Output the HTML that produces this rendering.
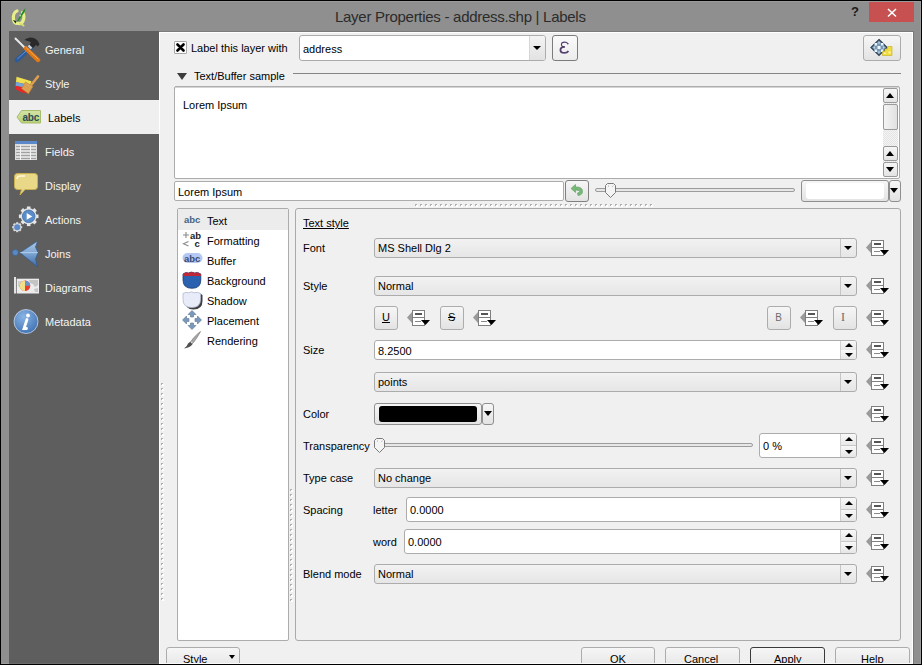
<!DOCTYPE html>
<html><head><meta charset="utf-8">
<style>
*{box-sizing:border-box;margin:0;padding:0}
html,body{width:922px;height:665px;overflow:hidden;background:#000}
body{position:relative;font-family:"Liberation Sans",sans-serif;font-size:11px;color:#000}
.a{position:absolute}
.t{position:absolute;line-height:13px;white-space:nowrap;font-size:11px}
#frame{left:1px;top:1px;width:920px;height:663px;background:#8f8f8f;border-top:1px solid #9b9b9b;border-right:1px solid #9b9b9b;border-bottom:1px solid #9b9b9b}
#side{left:9px;top:31px;width:150px;height:633px;background:#5e5e5e;border-bottom:1px solid #6b6b6b}
#content{left:159px;top:31px;width:755px;height:633px;background:#f0f0f0;border-top:1px solid #7a7a7a;border-right:1px solid #7a7a7a;box-shadow:inset 1px 1px 0 #fff,inset -1px -1px 0 #fff}
.si{position:absolute;left:0;width:150px;height:34px}
.si .t{color:#f4f4f4;top:12px;left:36px}
.si.sel{background:#efefef}
.si.sel .t{color:#000}
.ico{position:absolute;left:5px;top:5px;width:24px;height:24px}
.box{position:absolute;background:#fff;border:1px solid #acacac;border-radius:2px}
.combo{position:absolute;border:1px solid #acacac;border-radius:3px;background:linear-gradient(#f2f2f2,#e6e6e6)}
.combo .arr{position:absolute;right:0;top:0;bottom:0;width:16px;border-left:1px solid #c5c5c5}
.combo .arr:after{content:"";position:absolute;left:3px;top:7px;border-left:4px solid transparent;border-right:4px solid transparent;border-top:4px solid #000}
.btn{position:absolute;border:1px solid #acacac;border-radius:3px;background:linear-gradient(#f6f6f6,#e3e3e3)}
.dd{position:absolute;width:23px;height:16px}
.spin{position:absolute;background:#fff;border:1px solid #acacac;border-radius:3px}
.spin .sb{position:absolute;right:0;top:0;bottom:0;width:16px;border-left:1px solid #d0d0d0;background:linear-gradient(#f8f8f8,#e8e8e8 49%,#c8c8c8 49%,#c8c8c8 51%,#f8f8f8 51%,#e6e6e6);border-radius:0 2px 2px 0}
.spin .sb:before{content:"";position:absolute;left:4px;top:3px;border-left:4.5px solid transparent;border-right:4.5px solid transparent;border-bottom:4px solid #000}
.spin .sb:after{content:"";position:absolute;left:4px;bottom:3px;border-left:4.5px solid transparent;border-right:4.5px solid transparent;border-top:4px solid #000}
.spin.s20 .sb:before{top:2px}.spin.s20 .sb:after{bottom:2px}
.lbl{position:absolute;line-height:13px;white-space:nowrap}
</style></head><body>
<div id="frame" class="a"></div>
<!-- title -->
<div class="t" style="left:335px;top:8px;font-size:15px;letter-spacing:-0.28px;line-height:17px;color:#2b2b2b">Layer Properties - address.shp | Labels</div>
<div class="t" style="left:851px;top:5px;font-size:13px;font-weight:bold;color:#1a1a1a">?</div>
<div class="a" style="left:869px;top:2px;width:45px;height:20px;background:#c75050"></div>

<div id="side" class="a">
  <div class="si" style="top:1px"><div class="t">General</div></div>
  <div class="si" style="top:35px"><div class="t">Style</div></div>
  <div class="si sel" style="top:69px"><div class="t" style="left:39px">Labels</div></div>
  <div class="si" style="top:103px"><div class="t">Fields</div></div>
  <div class="si" style="top:137px"><div class="t">Display</div></div>
  <div class="si" style="top:171px"><div class="t">Actions</div></div>
  <div class="si" style="top:205px"><div class="t">Joins</div></div>
  <div class="si" style="top:239px"><div class="t">Diagrams</div></div>
  <div class="si" style="top:273px"><div class="t">Metadata</div></div>
</div>
<div id="content" class="a"></div>

<!-- top row -->
<div class="a" style="left:174px;top:41px;width:13px;height:13px;background:#fff;border:1px solid #a8a8a8;border-radius:1px"></div>
<svg class="a" style="left:176px;top:43px" width="9" height="9" viewBox="0 0 9 9"><path d="M1.5 1.5L7.5 7.5M7.5 1.5L1.5 7.5" stroke="#000" stroke-width="2.6" stroke-linecap="round"/></svg>
<div class="t" style="left:191px;top:42px">Label this layer with</div>
<div class="box" style="left:299px;top:35px;width:247px;height:26px;border-radius:3px"></div>
<div class="a" style="left:529px;top:36px;width:16px;height:24px;border-left:1px solid #d6d6d6;background:linear-gradient(#f4f4f4,#e2e2e2);border-radius:0 2px 2px 0"></div>
<div class="a" style="left:533px;top:46px;border-left:4px solid transparent;border-right:4px solid transparent;border-top:4px solid #000"></div>
<div class="t" style="left:303px;top:43px">address</div>
<div class="btn" style="left:552px;top:35px;width:26px;height:26px;border-color:#7c7c7c;background:linear-gradient(#fafafa,#ececec)"></div>
<svg class="a" style="left:559px;top:41px" width="11" height="13" viewBox="0 0 12 14"><path d="M9.8 3C9 1.6 7.6 1.1 6.1 1.1C3.8 1.1 2.6 2.3 2.6 3.8C2.6 5.3 4 6.4 6.3 6.4" fill="none" stroke="#55406e" stroke-width="1.2"/><circle cx="9.6" cy="2.9" r="0.9" fill="#55406e"/><path d="M6.3 6.4C3.3 6.4 1.6 7.8 1.6 9.7C1.6 11.6 3.3 12.9 5.9 12.9C7.9 12.9 9.4 12.1 10.3 10.7" fill="none" stroke="#55406e" stroke-width="2"/></svg>
<div class="btn" style="left:863px;top:35px;width:38px;height:26px"></div>

<div class="a" style="left:177px;top:73px;border-left:5.5px solid transparent;border-right:5.5px solid transparent;border-top:7px solid #3c3c3c"></div>
<div class="t" style="left:194px;top:70px">Text/Buffer sample</div>
<div class="a" style="left:293px;top:73px;width:608px;height:1px;background:#858585"></div>

<div class="box" style="left:174px;top:86px;width:726px;height:93px;border-color:#acacac;box-shadow:inset 0 1px 0 #d4d4d4"></div>
<div class="t" style="left:183px;top:99px">Lorem Ipsum</div>

<div class="box" style="left:174px;top:181px;width:390px;height:20px"></div>
<div class="t" style="left:178px;top:186px">Lorem Ipsum</div>
<div class="btn" style="left:565px;top:180px;width:24px;height:22px;border-color:#808080"></div>
<div class="a" style="left:595px;top:188px;width:200px;height:4px;border:1px solid #9c9c9c;border-radius:2px;background:#e7e7e7"></div>
<div class="btn" style="left:801px;top:180px;width:88px;height:22px;border-color:#8f8f8f"></div><div class="a" style="left:806px;top:183px;width:78px;height:16px;background:#fff;border-radius:3px"></div>
<div class="btn" style="left:889px;top:180px;width:12px;height:22px;border-color:#8f8f8f"></div>
<div class="a" style="left:890px;top:188px;border-left:4.5px solid transparent;border-right:4.5px solid transparent;border-top:5px solid #000"></div>
<div class="a" style="left:415px;top:204px;width:239px;height:2px;background:repeating-linear-gradient(90deg,#b0b0b0 0 2px,transparent 2px 5px)"></div><div class="a" style="left:416px;top:205px;width:239px;height:2px;background:repeating-linear-gradient(90deg,#fff 0 2px,transparent 2px 5px)"></div>

<div class="box" style="left:177px;top:208px;width:112px;height:433px"></div>
<div class="a" style="left:295px;top:208px;width:606px;height:433px;border:1px solid #aaaaaa;border-radius:3px"></div>

<div class="t" style="left:303px;top:217px;text-decoration:underline">Text style</div>
<div class="t" style="left:303px;top:242px">Font</div>
<div class="t" style="left:303px;top:280px">Style</div>
<div class="t" style="left:303px;top:344px">Size</div>
<div class="t" style="left:303px;top:408px">Color</div>
<div class="t" style="left:303px;top:440px">Transparency</div>
<div class="t" style="left:303px;top:472px">Type case</div>
<div class="t" style="left:303px;top:504px">Spacing</div>
<div class="t" style="left:303px;top:568px">Blend mode</div>
<div class="t" style="left:373px;top:504px">letter</div>
<div class="t" style="left:373px;top:536px">word</div>
<div class="combo" style="left:374px;top:238px;width:483px;height:20px"><div class="arr"></div></div><div class="t" style="left:378px;top:242px">MS Shell Dlg 2</div>
<div class="combo" style="left:374px;top:276px;width:483px;height:20px"><div class="arr"></div></div><div class="t" style="left:378px;top:280px">Normal</div>
<div class="btn" style="left:374px;top:306px;width:24px;height:24px"></div><div class="t" style="left:382px;top:311px;text-decoration:underline">U</div>
<div class="btn" style="left:440px;top:306px;width:24px;height:24px"></div><div class="t" style="left:448px;top:311px;text-decoration:line-through">S</div>
<div class="btn" style="left:767px;top:306px;width:24px;height:24px"></div><div class="t" style="left:775px;top:311px;color:#6a6a6a;font-size:11px;transform:scaleX(0.9)">B</div>
<div class="btn" style="left:833px;top:306px;width:24px;height:24px"></div><div class="t" style="left:841px;top:311px;color:#6a6a6a;font-family:'Liberation Serif';font-size:12px">I</div>
<div class="spin s20" style="left:374px;top:340px;width:483px;height:20px"><div class="sb"></div></div><div class="t" style="left:378px;top:345px">8.2500</div>
<div class="combo" style="left:374px;top:372px;width:483px;height:20px"><div class="arr"></div></div><div class="t" style="left:378px;top:376px">points</div>
<div class="btn" style="left:374px;top:403px;width:108px;height:22px;border-color:#8f8f8f"></div><div class="a" style="left:379px;top:406px;width:98px;height:16px;background:#000;border-radius:3px"></div>
<div class="btn" style="left:482px;top:403px;width:12px;height:22px;border-color:#8f8f8f"></div><div class="a" style="left:484px;top:411px;border-left:4px solid transparent;border-right:4px solid transparent;border-top:5px solid #000"></div>
<div class="a" style="left:379px;top:443px;width:374px;height:4px;border:1px solid #9c9c9c;border-radius:2px;background:#e7e7e7"></div>
<svg class="a" style="left:373px;top:437px" width="13" height="17" viewBox="0 0 13 17"><path d="M1.5 3.5L3.5 1.5H9.5L11.5 3.5V10.5L6.5 15.5L1.5 10.5Z" fill="#f4f4f4" stroke="#7a7a7a" stroke-linejoin="round"/><path d="M4 4.5L4.8 3.8M8.5 4.5L9.3 3.8" stroke="#999"/></svg>
<div class="spin" style="left:759px;top:433px;width:98px;height:25px"><div class="sb"></div></div><div class="t" style="left:763px;top:440px">0 %</div>
<div class="combo" style="left:374px;top:468px;width:483px;height:20px"><div class="arr"></div></div><div class="t" style="left:378px;top:472px">No change</div>
<div class="spin" style="left:406px;top:497px;width:451px;height:25px"><div class="sb"></div></div><div class="t" style="left:410px;top:504px">0.0000</div>
<div class="spin" style="left:404px;top:529px;width:453px;height:25px"><div class="sb"></div></div><div class="t" style="left:408px;top:536px">0.0000</div>
<div class="combo" style="left:374px;top:564px;width:483px;height:20px"><div class="arr"></div></div><div class="t" style="left:378px;top:568px">Normal</div>
<svg class="dd" style="left:866px;top:240px" width="23" height="16" viewBox="0 0 23 16"><path d="M0 7.5L5 2V13Z" fill="#9a9a9a"/><rect x="5.5" y="0.5" width="12" height="15" fill="#fff" stroke="#7f7f7f"/><path d="M5.5 7.5H17.5" stroke="#7f7f7f"/><rect x="8" y="3" width="7" height="2" fill="#555"/><path d="M8 11.5H14" stroke="#888"/><path d="M14 10H23L18.5 15Z" fill="#000"/></svg>
<svg class="dd" style="left:866px;top:278px" width="23" height="16" viewBox="0 0 23 16"><path d="M0 7.5L5 2V13Z" fill="#9a9a9a"/><rect x="5.5" y="0.5" width="12" height="15" fill="#fff" stroke="#7f7f7f"/><path d="M5.5 7.5H17.5" stroke="#7f7f7f"/><rect x="8" y="3" width="7" height="2" fill="#555"/><path d="M8 11.5H14" stroke="#888"/><path d="M14 10H23L18.5 15Z" fill="#000"/></svg>
<svg class="dd" style="left:866px;top:310px" width="23" height="16" viewBox="0 0 23 16"><path d="M0 7.5L5 2V13Z" fill="#9a9a9a"/><rect x="5.5" y="0.5" width="12" height="15" fill="#fff" stroke="#7f7f7f"/><path d="M5.5 7.5H17.5" stroke="#7f7f7f"/><rect x="8" y="3" width="7" height="2" fill="#555"/><path d="M8 11.5H14" stroke="#888"/><path d="M14 10H23L18.5 15Z" fill="#000"/></svg>
<svg class="dd" style="left:866px;top:342px" width="23" height="16" viewBox="0 0 23 16"><path d="M0 7.5L5 2V13Z" fill="#9a9a9a"/><rect x="5.5" y="0.5" width="12" height="15" fill="#fff" stroke="#7f7f7f"/><path d="M5.5 7.5H17.5" stroke="#7f7f7f"/><rect x="8" y="3" width="7" height="2" fill="#555"/><path d="M8 11.5H14" stroke="#888"/><path d="M14 10H23L18.5 15Z" fill="#000"/></svg>
<svg class="dd" style="left:866px;top:374px" width="23" height="16" viewBox="0 0 23 16"><path d="M0 7.5L5 2V13Z" fill="#9a9a9a"/><rect x="5.5" y="0.5" width="12" height="15" fill="#fff" stroke="#7f7f7f"/><path d="M5.5 7.5H17.5" stroke="#7f7f7f"/><rect x="8" y="3" width="7" height="2" fill="#555"/><path d="M8 11.5H14" stroke="#888"/><path d="M14 10H23L18.5 15Z" fill="#000"/></svg>
<svg class="dd" style="left:866px;top:406px" width="23" height="16" viewBox="0 0 23 16"><path d="M0 7.5L5 2V13Z" fill="#9a9a9a"/><rect x="5.5" y="0.5" width="12" height="15" fill="#fff" stroke="#7f7f7f"/><path d="M5.5 7.5H17.5" stroke="#7f7f7f"/><rect x="8" y="3" width="7" height="2" fill="#555"/><path d="M8 11.5H14" stroke="#888"/><path d="M14 10H23L18.5 15Z" fill="#000"/></svg>
<svg class="dd" style="left:866px;top:438px" width="23" height="16" viewBox="0 0 23 16"><path d="M0 7.5L5 2V13Z" fill="#9a9a9a"/><rect x="5.5" y="0.5" width="12" height="15" fill="#fff" stroke="#7f7f7f"/><path d="M5.5 7.5H17.5" stroke="#7f7f7f"/><rect x="8" y="3" width="7" height="2" fill="#555"/><path d="M8 11.5H14" stroke="#888"/><path d="M14 10H23L18.5 15Z" fill="#000"/></svg>
<svg class="dd" style="left:866px;top:470px" width="23" height="16" viewBox="0 0 23 16"><path d="M0 7.5L5 2V13Z" fill="#9a9a9a"/><rect x="5.5" y="0.5" width="12" height="15" fill="#fff" stroke="#7f7f7f"/><path d="M5.5 7.5H17.5" stroke="#7f7f7f"/><rect x="8" y="3" width="7" height="2" fill="#555"/><path d="M8 11.5H14" stroke="#888"/><path d="M14 10H23L18.5 15Z" fill="#000"/></svg>
<svg class="dd" style="left:866px;top:502px" width="23" height="16" viewBox="0 0 23 16"><path d="M0 7.5L5 2V13Z" fill="#9a9a9a"/><rect x="5.5" y="0.5" width="12" height="15" fill="#fff" stroke="#7f7f7f"/><path d="M5.5 7.5H17.5" stroke="#7f7f7f"/><rect x="8" y="3" width="7" height="2" fill="#555"/><path d="M8 11.5H14" stroke="#888"/><path d="M14 10H23L18.5 15Z" fill="#000"/></svg>
<svg class="dd" style="left:866px;top:534px" width="23" height="16" viewBox="0 0 23 16"><path d="M0 7.5L5 2V13Z" fill="#9a9a9a"/><rect x="5.5" y="0.5" width="12" height="15" fill="#fff" stroke="#7f7f7f"/><path d="M5.5 7.5H17.5" stroke="#7f7f7f"/><rect x="8" y="3" width="7" height="2" fill="#555"/><path d="M8 11.5H14" stroke="#888"/><path d="M14 10H23L18.5 15Z" fill="#000"/></svg>
<svg class="dd" style="left:866px;top:566px" width="23" height="16" viewBox="0 0 23 16"><path d="M0 7.5L5 2V13Z" fill="#9a9a9a"/><rect x="5.5" y="0.5" width="12" height="15" fill="#fff" stroke="#7f7f7f"/><path d="M5.5 7.5H17.5" stroke="#7f7f7f"/><rect x="8" y="3" width="7" height="2" fill="#555"/><path d="M8 11.5H14" stroke="#888"/><path d="M14 10H23L18.5 15Z" fill="#000"/></svg>
<svg class="dd" style="left:407px;top:310px" width="23" height="16" viewBox="0 0 23 16"><path d="M0 7.5L5 2V13Z" fill="#9a9a9a"/><rect x="5.5" y="0.5" width="12" height="15" fill="#fff" stroke="#7f7f7f"/><path d="M5.5 7.5H17.5" stroke="#7f7f7f"/><rect x="8" y="3" width="7" height="2" fill="#555"/><path d="M8 11.5H14" stroke="#888"/><path d="M14 10H23L18.5 15Z" fill="#000"/></svg>
<svg class="dd" style="left:473px;top:310px" width="23" height="16" viewBox="0 0 23 16"><path d="M0 7.5L5 2V13Z" fill="#9a9a9a"/><rect x="5.5" y="0.5" width="12" height="15" fill="#fff" stroke="#7f7f7f"/><path d="M5.5 7.5H17.5" stroke="#7f7f7f"/><rect x="8" y="3" width="7" height="2" fill="#555"/><path d="M8 11.5H14" stroke="#888"/><path d="M14 10H23L18.5 15Z" fill="#000"/></svg>
<svg class="dd" style="left:800px;top:310px" width="23" height="16" viewBox="0 0 23 16"><path d="M0 7.5L5 2V13Z" fill="#9a9a9a"/><rect x="5.5" y="0.5" width="12" height="15" fill="#fff" stroke="#7f7f7f"/><path d="M5.5 7.5H17.5" stroke="#7f7f7f"/><rect x="8" y="3" width="7" height="2" fill="#555"/><path d="M8 11.5H14" stroke="#888"/><path d="M14 10H23L18.5 15Z" fill="#000"/></svg>
<div class="a" style="left:178px;top:209px;width:110px;height:21px;background:#ececec"></div>
<div class="t" style="left:207px;top:215px">Text</div>
<div class="t" style="left:207px;top:235px">Formatting</div>
<div class="t" style="left:207px;top:255px">Buffer</div>
<div class="t" style="left:207px;top:275px">Background</div>
<div class="t" style="left:207px;top:295px">Shadow</div>
<div class="t" style="left:207px;top:315px">Placement</div>
<div class="t" style="left:207px;top:335px">Rendering</div>
<div class="btn" style="left:166px;top:647px;width:74px;height:24px;border-color:#acacac"></div><div class="t" style="left:183px;top:653px">Style</div>
<div class="a" style="left:229px;top:655px;border-left:3px solid transparent;border-right:3px solid transparent;border-top:4px solid #000"></div>
<div class="btn" style="left:581px;top:647px;width:74px;height:24px;border-color:#acacac"></div><div class="t" style="left:610px;top:653px">OK</div>
<div class="btn" style="left:665px;top:647px;width:75px;height:24px;border-color:#acacac"></div><div class="t" style="left:684px;top:653px">Cancel</div>
<div class="btn" style="left:750px;top:647px;width:75px;height:24px;border-color:#3a3a3a"></div><div class="t" style="left:774px;top:653px">Apply</div>
<div class="btn" style="left:835px;top:647px;width:75px;height:24px;border-color:#acacac"></div><div class="t" style="left:861px;top:653px">Help</div>
<div class="a" style="left:160px;top:663px;width:753px;height:1px;background:#fafafa"></div><div class="a" style="left:0;top:664px;width:922px;height:1px;background:#000"></div>
<svg class="a" style="left:8px;top:4px" width="24" height="24" viewBox="0 0 24 24">
<path d="M9 7C6 8 5 12 5.5 15.5C6 19 8.5 19.5 9.5 19.5" stroke="#e6ef88" stroke-width="3.2" fill="none" stroke-linecap="round"/>
<path d="M14.5 8.5C16 10 16.5 14 15 17C14 19 12.5 20 11 19.5" stroke="#e6ef88" stroke-width="3.2" fill="none" stroke-linecap="round"/>
<path d="M12 19.5L15.5 21.5" stroke="#d8e070" stroke-width="2" stroke-linecap="round"/>
<path d="M9 17L15 7L17.5 4L16.5 8L10.5 17Z" fill="#1c8a1c"/>
<circle cx="12.3" cy="11.5" r="0.9" fill="#9ae89a"/>
<path d="M5 16L8.5 17L7.5 19.5Z" fill="#1a2a1a"/>
</svg>
<svg class="a" style="left:886px;top:7px" width="12" height="11" viewBox="0 0 12 11"><path d="M2 2L10 9.5M10 2L2 9.5" stroke="#fff" stroke-width="1.6"/></svg>
<svg class="a" style="left:12px;top:35px" width="30" height="28" viewBox="0 0 30 28">
<path d="M3.5 3.5L14 14" stroke="#e8e8e8" stroke-width="2" stroke-linecap="round"/>
<path d="M19 12.5L5 25" stroke="#2d5a98" stroke-width="4.5" stroke-linecap="round"/>
<path d="M18 12.5L5.5 23.8" stroke="#6890c8" stroke-width="1" stroke-linecap="round"/>
<path d="M14 13.5L26 25" stroke="#e07818" stroke-width="4.5" stroke-linecap="round"/>
<path d="M14.5 13L26 24" stroke="#f5a850" stroke-width="1" stroke-linecap="round"/>
<path d="M12.5 5C16 1.5 22 1.5 25.5 5.5L27.5 9L26 11.5L24 10L21 13L17.5 9.5L19 7.5C17 6 15 5.5 12.5 5Z" fill="#2a2a2a"/>
<path d="M16.5 10.5L19.5 13.5" stroke="#d8d8d8" stroke-width="2.2"/>
</svg>
<svg class="a" style="left:12px;top:72px" width="30" height="24" viewBox="0 0 30 24">
<path d="M4.5 4.8L19.5 9.2L18 13.2L4 10Z" fill="#f0e050"/>
<path d="M4 10L14 12.5L12 16L3.5 13.8Z" fill="#78a4d8"/>
<path d="M3.5 13.8L12 15.5L16.5 21.5L10 20.5L3 17Z" fill="#e82828"/>
<path d="M13.5 10L21 14.5L16.5 21.8L9.5 16.5Z" fill="#dca458" stroke="#b88030" stroke-width="0.6"/>
<path d="M12 12.5L19 17M11 14.5L17.5 19" stroke="#c89040" stroke-width="0.5"/>
<path d="M19.5 12.5L26 4.5" stroke="#dca050" stroke-width="2.6" stroke-linecap="round"/>
</svg>
<svg class="a" style="left:16px;top:109px" width="27" height="16" viewBox="0 0 27 16">
<defs><linearGradient id="lg" x1="0" y1="0" x2="0" y2="1"><stop offset="0" stop-color="#d4e4a8"/><stop offset="1" stop-color="#b8d070"/></linearGradient></defs>
<path d="M1 8L5.5 1.5H24.5V14H5.5Z" fill="url(#lg)" stroke="#a8bc70" stroke-width="1"/>
<text x="6.5" y="11.5" font-family="Liberation Sans" font-weight="bold" font-size="10" letter-spacing="-0.2" fill="#2a4a58">abc</text>
</svg>
<svg class="a" style="left:14px;top:140px" width="24" height="21" viewBox="0 0 24 21">
<rect x="1" y="1" width="22" height="19" fill="#dcdcdc"/>
<rect x="1" y="1" width="22" height="3" fill="#5a88c8"/>
<path d="M2 6.5H22M2 9.5H22M2 12.5H22M2 15.5H22M2 18.5H22" stroke="#a0a0a0" stroke-width="1"/>
<path d="M6.5 5V20M16.5 5V20" stroke="#f4f4f4" stroke-width="1"/>
</svg>
<svg class="a" style="left:13px;top:172px" width="26" height="25" viewBox="0 0 26 25">
<path d="M4.5 1.5H21.5Q24.5 1.5 24.5 4.5V14.5Q24.5 17.5 21.5 17.5H12L7 23L8.5 17.5H4.5Q1.5 17.5 1.5 14.5V4.5Q1.5 1.5 4.5 1.5Z" fill="#e8d888" stroke="#c8b050" stroke-width="1"/>
<path d="M4 7Q4 4 8 4H12" stroke="#fff8d8" stroke-width="1.5" fill="none"/>
</svg>
<svg class="a" style="left:12px;top:203px" width="30" height="30" viewBox="0 0 30 30">
<g transform="translate(16.7,13.3)"><g fill="#e6e6e6"><rect x="-1.8" y="-9.8" width="3.6" height="19.6" transform="rotate(0)"/><rect x="-1.8" y="-9.8" width="3.6" height="19.6" transform="rotate(45)"/><rect x="-1.8" y="-9.8" width="3.6" height="19.6" transform="rotate(90)"/><rect x="-1.8" y="-9.8" width="3.6" height="19.6" transform="rotate(135)"/></g><circle r="8" fill="#e6e6e6"/>
<circle r="6.3" fill="#5a8cc8" stroke="#3f6ea8" stroke-width="0.8"/><path d="M-2 -3.2L3.6 0.2L-2 3.4Z" fill="#fff"/></g>
<g transform="translate(5.2,24.2)"><g fill="#d8d8d8"><rect x="-1.1" y="-5" width="2.2" height="10" transform="rotate(0)"/><rect x="-1.1" y="-5" width="2.2" height="10" transform="rotate(45)"/><rect x="-1.1" y="-5" width="2.2" height="10" transform="rotate(90)"/><rect x="-1.1" y="-5" width="2.2" height="10" transform="rotate(135)"/></g><circle r="3.9" fill="#d8d8d8"/><circle r="3" fill="#5a8ac8"/></g>
</svg>
<svg class="a" style="left:12px;top:239px" width="28" height="30" viewBox="0 0 28 30">
<defs><linearGradient id="jg" x1="0" y1="0" x2="0" y2="1"><stop offset="0" stop-color="#b0cce8"/><stop offset="0.5" stop-color="#7aa2d0"/><stop offset="1" stop-color="#3a66a4"/></linearGradient></defs>
<circle cx="3.3" cy="13.6" r="3" fill="#5a88c0" stroke="#3a6098" stroke-width="0.6"/>
<path d="M8 13.6L25.6 2L23.5 8L26 13.6L23.5 20L25.6 28Z" fill="url(#jg)" stroke="#2e5a90" stroke-width="0.7"/>
<path d="M8 13.6L26 13.6" stroke="#d8e8f8" stroke-width="0.6"/>
</svg>
<svg class="a" style="left:13px;top:276px" width="27" height="19" viewBox="0 0 27 19">
<rect x="1" y="1" width="2" height="16.5" fill="#e4e4e4"/>
<rect x="3.7" y="2.7" width="22.3" height="14.8" fill="#ececec"/>
<path d="M16 4H25V9L22 11L20 8L17 7Z" fill="#c4c4c4"/><path d="M5 5H9L10 8L7 12L5 10Z" fill="#d0d0d0"/><path d="M21 13L25 12V16H22Z" fill="#c8c8c8"/>
<circle cx="12" cy="9.7" r="5.3" fill="#e84030"/>
<path d="M12 9.7V4.4A5.3 5.3 0 0 0 12 15Z" fill="#f2e088"/>
<path d="M12 9.7V4.4A5.3 5.3 0 0 1 17.3 9.7Z" fill="#6a92cc"/>
</svg>
<svg class="a" style="left:13px;top:309px" width="26" height="26" viewBox="0 0 26 26">
<defs><radialGradient id="mg" cx="0.4" cy="0.3" r="0.8"><stop offset="0" stop-color="#8ab4e4"/><stop offset="1" stop-color="#3a6cb0"/></radialGradient></defs>
<circle cx="13" cy="12.5" r="12" fill="url(#mg)" stroke="#c8d8ec" stroke-width="0.8"/>
<path d="M14 10.5L11 19.5H13.5" stroke="#fff" stroke-width="2.8" fill="none" stroke-linecap="round"/>
<circle cx="15" cy="6.5" r="1.9" fill="#fff"/>
</svg>
<div class="t" style="left:184px;top:213px;font-size:9.5px;font-weight:bold;color:#456483">abc</div>
<svg class="a" style="left:182px;top:230px" width="22" height="18" viewBox="0 0 22 18">
<path d="M1 5H7M4 2V8" stroke="#8a8a8a" stroke-width="1.1"/>
<text x="8" y="8.5" font-family="Liberation Sans" font-weight="bold" font-size="9.5" fill="#222">ab</text>
<path d="M6.5 11.5L1.5 13.8L6.5 16" stroke="#8a8a8a" stroke-width="1.1" fill="none"/>
<text x="12.5" y="16.5" font-family="Liberation Sans" font-weight="bold" font-size="9.5" fill="#222">c</text>
</svg>
<svg class="a" style="left:182px;top:251px" width="22" height="14" viewBox="0 0 22 14">
<rect x="0.5" y="2" width="20" height="10" rx="5" fill="#b4c8f4"/>
<text x="2" y="10.5" font-family="Liberation Sans" font-weight="bold" font-size="9.5" fill="#3a4a70">abc</text>
</svg>
<svg class="a" style="left:182px;top:271px" width="20" height="18" viewBox="0 0 20 18">
<path d="M1 3Q4 0.8 6.5 2Q9.5 0.2 12.5 2Q15.5 0.8 18.8 3V9Q18.8 17.3 10 17.3Q1 17.3 1 9Z" fill="#2a62b0" stroke="#1a3a70" stroke-width="0.8"/>
<path d="M1 3Q4 0.8 6.5 2Q9.5 0.2 12.5 2Q15.5 0.8 18.8 3V5H1Z" fill="#c02838"/>
</svg>
<svg class="a" style="left:182px;top:291px" width="21" height="19" viewBox="0 0 21 19">
<path d="M3 4Q6 1.8 8.5 3Q11.5 1.2 14.5 3Q17.5 1.8 20.5 4V10Q20.5 18.5 11.5 18.5Q3 18.5 3 10Z" fill="#404040"/>
<path d="M1 2.5Q4 0.5 6.5 1.8Q9.5 0 12.5 1.8Q15.5 0.5 18.5 2.5V8.5Q18.5 16.5 9.8 16.5Q1 16.5 1 8.5Z" fill="#e8ecf8" stroke="#b0b8d0" stroke-width="0.8"/>
</svg>
<svg class="a" style="left:182px;top:310px" width="20" height="20" viewBox="0 0 20 20">
<g fill="#7a98b8" stroke="#5a7898" stroke-width="0.6">
<path d="M10 0.5L14 4.5H11.5V7H8.5V4.5H6Z"/><path d="M10 19.5L14 15.5H11.5V13H8.5V15.5H6Z"/>
<path d="M0.5 10L4.5 6V8.5H7V11.5H4.5V14Z"/><path d="M19.5 10L15.5 6V8.5H13V11.5H15.5V14Z"/>
</g></svg>
<svg class="a" style="left:182px;top:331px" width="20" height="19" viewBox="0 0 20 19">
<path d="M18.5 0.5C15 3 11 7 9 10.5L11 12C13.5 9 16.5 4.5 18.5 0.5Z" fill="#a8a8a8" stroke="#707070" stroke-width="0.6"/>
<path d="M8.5 10.5L11 12.5Q9 16.5 2 17.5Q5.5 15 6 12.5Z" fill="#505050"/>
<path d="M9 11L10.5 12.2" stroke="#e0e0e0" stroke-width="1.2"/>
</svg>
<svg class="a" style="left:869px;top:38px" width="26" height="20" viewBox="0 0 26 20">
<path d="M10 1.5L18 9.5L10 17.5L2 9.5Z" fill="#7a98b4" stroke="#2e4050" stroke-width="1.2"/>
<rect x="8.5" y="8" width="3" height="3" fill="#f0f8ff"/>
<rect x="5.5" y="5" width="2.5" height="2.5" fill="#e8f4ff"/><rect x="12" y="5" width="2.5" height="2.5" fill="#e8f4ff"/>
<rect x="5.5" y="11.5" width="2.5" height="2.5" fill="#e8f4ff"/><rect x="12" y="11.5" width="2.5" height="2.5" fill="#e8f4ff"/>
<path d="M10 3.5L11.5 5.5H8.5ZM10 15.5L11.5 13.5H8.5ZM4 9.5L6 8V11ZM16 9.5L14 8V11Z" fill="#b8d0e8"/>
<path d="M13.5 17.5V13.5H16V11H18.5V8.5H23V17.5Z" fill="#f0dc3c" stroke="#c8b428" stroke-width="0.7"/>
<rect x="19.5" y="13.5" width="2" height="2" fill="#fff6b8"/><rect x="15" y="14.5" width="1.8" height="1.5" fill="#fff6b8"/>
</svg>
<svg class="a" style="left:569px;top:183px" width="16" height="15" viewBox="0 0 16 15">
<path d="M2 5.5L6.5 1.5V4Q13.5 3.5 13.5 8.5Q13.5 12 9 12.5L8.5 10Q10.5 9.5 10.5 8.5Q10.5 7 6.5 7V9.5Z" fill="#78b878" stroke="#5a9a5a" stroke-width="0.6"/>
</svg>
<!-- scrollbar -->
<div class="a" style="left:883px;top:88px;width:15px;height:89px;background:repeating-conic-gradient(#e4e4e4 0 25%,#f4f4f4 0 50%) 0 0/2px 2px"></div>
<div class="btn" style="left:883px;top:88px;width:15px;height:15px;border-color:#9a9a9a;border-radius:2px"></div>
<div class="a" style="left:886px;top:93px;border-left:4.5px solid transparent;border-right:4.5px solid transparent;border-bottom:5px solid #000"></div>
<div class="btn" style="left:883px;top:104px;width:15px;height:26px;border-color:#9a9a9a;border-radius:2px;background:linear-gradient(90deg,#f4f4f4,#e0e0e0)"></div>
<div class="btn" style="left:883px;top:146px;width:15px;height:15px;border-color:#9a9a9a;border-radius:2px"></div>
<div class="a" style="left:886px;top:151px;border-left:4.5px solid transparent;border-right:4.5px solid transparent;border-bottom:5px solid #000"></div>
<div class="btn" style="left:883px;top:162px;width:15px;height:15px;border-color:#9a9a9a;border-radius:2px"></div>
<div class="a" style="left:886px;top:167px;border-left:4.5px solid transparent;border-right:4.5px solid transparent;border-top:5px solid #000"></div>
<div class="a" style="left:161px;top:383px;width:2px;height:218px;background:repeating-linear-gradient(180deg,#b0b0b0 0 2px,transparent 2px 5px)"></div><div class="a" style="left:162px;top:384px;width:2px;height:218px;background:repeating-linear-gradient(180deg,#fff 0 2px,transparent 2px 5px)"></div>
<div class="a" style="left:290px;top:489px;width:2px;height:113px;background:repeating-linear-gradient(180deg,#b0b0b0 0 2px,transparent 2px 5px)"></div><div class="a" style="left:291px;top:490px;width:2px;height:113px;background:repeating-linear-gradient(180deg,#fff 0 2px,transparent 2px 5px)"></div>
<svg class="a" style="left:604px;top:182px" width="13" height="17" viewBox="0 0 13 17"><path d="M1.5 3.5L3.5 1.5H9.5L11.5 3.5V10.5L6.5 15.5L1.5 10.5Z" fill="#f4f4f4" stroke="#7a7a7a" stroke-linejoin="round"/><path d="M4 4.5L4.8 3.8M8.5 4.5L9.3 3.8" stroke="#999"/></svg>
</body></html>
